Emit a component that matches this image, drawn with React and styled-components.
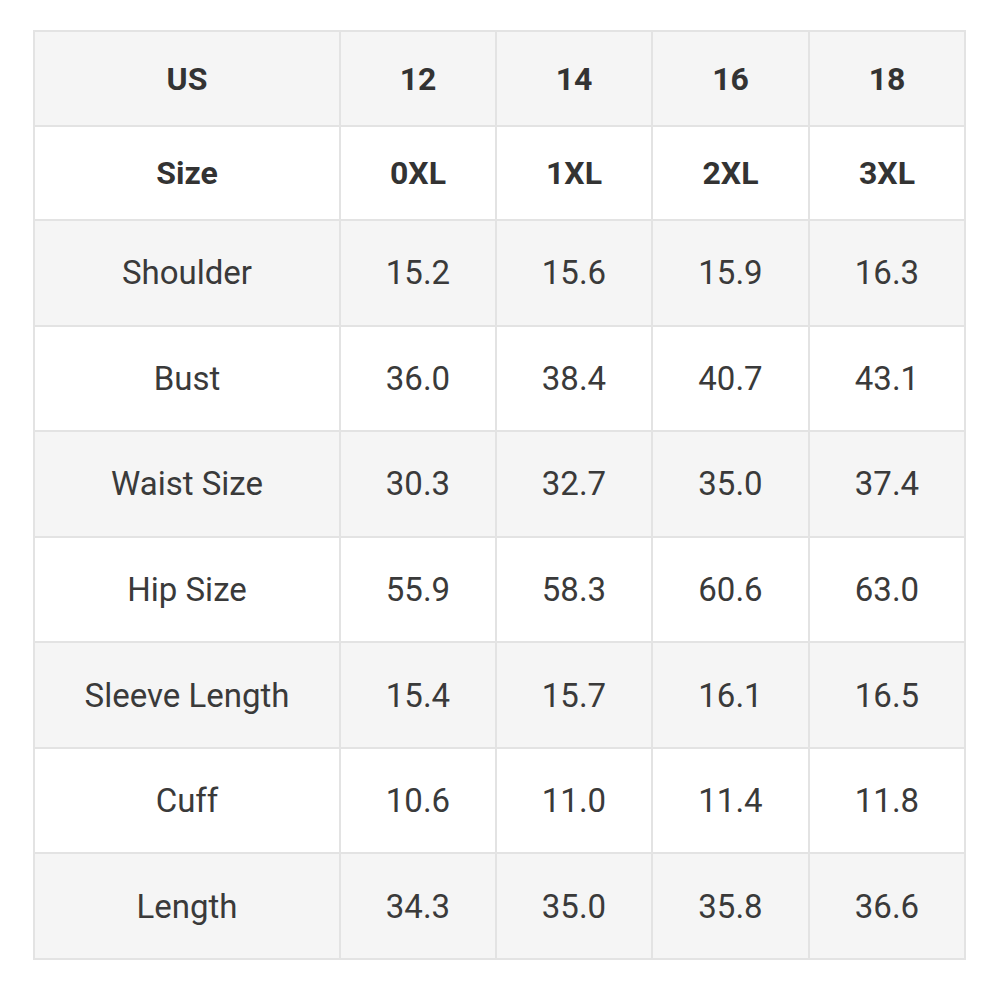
import React from 'react';
import styled, { createGlobalStyle } from 'styled-components';

const GlobalStyle = createGlobalStyle`
  body {
    margin: 0;
    background: #fff;
    font-family: Roboto, "Liberation Sans", Arial, sans-serif;
  }
`;

const Page = styled.div`
  padding: 30px 0 0 33px;
`;

const Grid = styled.div`
  display: grid;
  width: 933px;
  box-sizing: border-box;
  grid-template-columns: 304px 154px 154px 155px 154px;
  grid-template-rows: 93px 92px repeat(7, 103.57px);
  gap: 2px;
  padding: 2px;
  background: #e3e3e3;
`;

const Cell = styled.div`
  display: flex;
  align-items: center;
  justify-content: center;
  background: ${({ $striped }) => ($striped ? '#f5f5f5' : '#ffffff')};
  color: ${({ $bold }) => ($bold ? '#333' : '#3a3a3a')};
  font-size: ${({ $bold }) => ($bold ? '32px' : '33px')};
  font-weight: ${({ $bold }) => ($bold ? 700 : 400)};
`;

const rows = [
  ['US', '12', '14', '16', '18'],
  ['Size', '0XL', '1XL', '2XL', '3XL'],
  ['Shoulder', '15.2', '15.6', '15.9', '16.3'],
  ['Bust', '36.0', '38.4', '40.7', '43.1'],
  ['Waist Size', '30.3', '32.7', '35.0', '37.4'],
  ['Hip Size', '55.9', '58.3', '60.6', '63.0'],
  ['Sleeve Length', '15.4', '15.7', '16.1', '16.5'],
  ['Cuff', '10.6', '11.0', '11.4', '11.8'],
  ['Length', '34.3', '35.0', '35.8', '36.6']
];

const App = () => (
  <Page>
    <GlobalStyle />
    <Grid>
      {rows.map((row, r) =>
        row.map((text, c) => (
          <Cell key={`${r}-${c}`} $striped={r % 2 === 0} $bold={r < 2}>
            {text}
          </Cell>
        ))
      )}
    </Grid>
  </Page>
);

export default App;
